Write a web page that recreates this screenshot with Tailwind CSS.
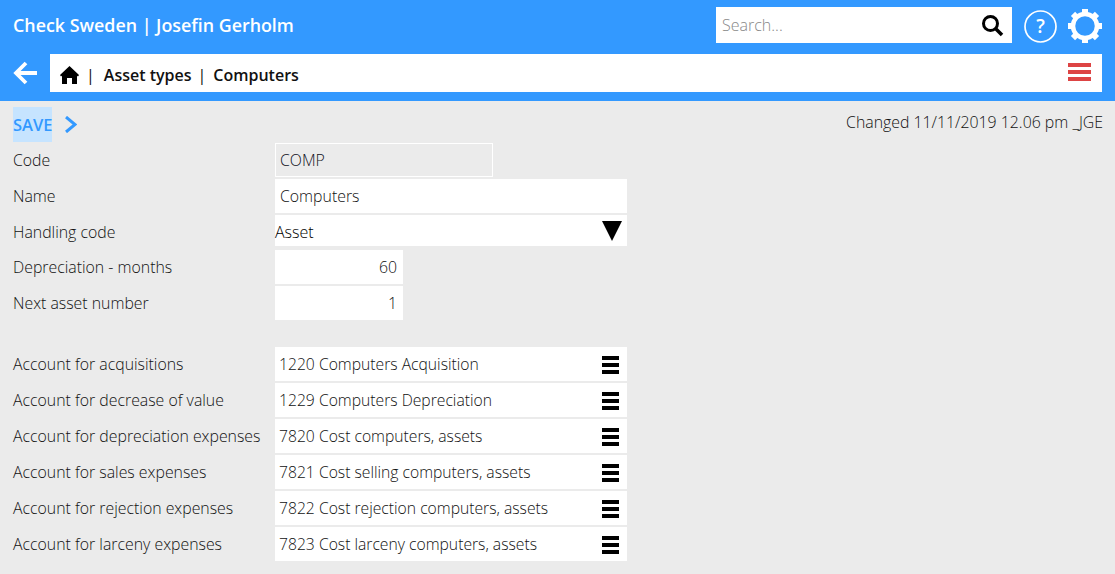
<!DOCTYPE html>
<html>
<head>
<meta charset="utf-8">
<script src="https://cdn.jsdelivr.net/npm/@tailwindcss/browser@4"></script>
</head>
<body class="m-0 bg-[#ebebeb] font-['Open_Sans',sans-serif] text-[15.850px] font-light text-[#111] h-[574px] w-[1115px] overflow-hidden">
<header class="bg-[#3399ff] h-[101px] flex flex-col">
  <div class="h-[54px] flex items-start">
    <div class="pl-[13px] pt-[12px] text-white text-[17.850px] font-semibold leading-[26px] flex-1">Check Sweden | Josefin Gerholm</div>
    <div class="mt-[7px] w-[296px] h-[36px] bg-white flex items-center justify-between pl-[6px] pr-[8px]">
      <span class="text-[16px] text-[#888]">Search...</span>
      <svg width="24" height="24" viewBox="0 0 24 24" fill="none" stroke="#000"><circle cx="10.5" cy="10.5" r="7" stroke-width="3"/><path d="M15.5 15.5 L22 22" stroke-width="3.6"/></svg>
    </div>
    <svg class="mt-[10px] ml-[12px]" width="33" height="33" viewBox="0 0 33 33"><circle cx="16.5" cy="16.5" r="15.500" fill="none" stroke="#fff" stroke-width="1.700"/><text x="16.5" y="23" text-anchor="middle" fill="#fff" font-size="19" font-weight="600" font-family="Open Sans">?</text></svg>
    <svg class="mt-[8px] ml-[10px] mr-[12px]" width="36" height="36" viewBox="0 0 36 36" fill="#fff">
      <circle cx="18" cy="18" r="12" fill="none" stroke="#fff" stroke-width="4.500"/>
      <rect x="15" y="1" width="6" height="6"/>
      <rect x="15" y="1" width="6" height="6" transform="rotate(45 18 18)"/>
      <rect x="15" y="1" width="6" height="6" transform="rotate(90 18 18)"/>
      <rect x="15" y="1" width="6" height="6" transform="rotate(135 18 18)"/>
      <rect x="15" y="1" width="6" height="6" transform="rotate(180 18 18)"/>
      <rect x="15" y="1" width="6" height="6" transform="rotate(225 18 18)"/>
      <rect x="15" y="1" width="6" height="6" transform="rotate(270 18 18)"/>
      <rect x="15" y="1" width="6" height="6" transform="rotate(315 18 18)"/>
    </svg>
  </div>
  <div class="flex items-start">
    <div class="w-[50px] h-[38px] flex items-center pl-[13px]">
      <svg width="25" height="26" viewBox="0 0 25 26" fill="none" stroke="#fff" stroke-width="3.800"><path d="M24 13H4M13 3 3 13l10 10"/></svg>
    </div>
    <div class="w-[1052px] h-[38px] bg-white flex items-center pl-[10px] pr-[11px] pt-[3px] text-[16px] font-semibold text-[#111]">
      <svg width="19" height="18" viewBox="0 0 19 18" fill="#000"><path d="M9.500 0 19 9l-1 1.500-1-.800V18h-5v-6H7v6H2V9.700l-1 .800L0 9z"/></svg>
      <span class="ml-[7px] font-normal">|</span>
      <span class="ml-[9px]">Asset types</span>
      <span class="ml-[6px] font-normal">|</span>
      <span class="ml-[7px]">Computers</span>
      <div class="ml-auto mb-[5px] w-[23px] flex flex-col gap-[3px]"><div class="h-[4px] bg-[#dd4444]"></div><div class="h-[4px] bg-[#dd4444]"></div><div class="h-[4px] bg-[#dd4444]"></div></div>
    </div>
  </div>
</header>
<main class="pl-[13px] pr-[12px]">
  <div class="flex items-start h-[42px] pt-[6px]">
    <span class="w-[39px] h-[35px] bg-[#c6e4ff] text-[#3399ff] text-[16.500px] font-semibold leading-[35px]">SAVE</span>
    <svg class="ml-[12px] mt-[9px]" width="13" height="17" viewBox="0 0 13 17" fill="none" stroke="#3399ff" stroke-width="3"><path d="M2 1l9 7.500-9 7.500"/></svg>
    <span class="ml-auto leading-[30px]">Changed 11/11/2019 12.06 pm _JGE</span>
  </div>
  <div class="flex flex-col">
    <div class="flex items-center h-[34px] mb-[2px]"><span class="w-[262px] pt-[2px]">Code</span><div class="w-[218px] h-full border border-white px-[4px] leading-[32px] text-[#112]">COMP</div></div>
    <div class="flex items-center h-[34px] mb-[2px]"><span class="w-[262px] pt-[2px]">Name</span><div class="w-[352px] h-full bg-white px-[5px] leading-[34px]">Computers</div></div>
    <div class="flex items-center h-[31px] mb-[4px]"><span class="w-[262px] pt-[4px]">Handling code</span><div class="w-[352px] h-full bg-white flex items-center justify-between pr-[5px] text-[16px] text-black"><span class="pt-[2px]">Asset</span><svg width="20" height="20" viewBox="0 0 20 20"><path d="M0 0h20L10 20z" fill="#000"/></svg></div></div>
    <div class="flex items-center h-[34px] mb-[2px]"><span class="w-[262px] pt-[2px]">Depreciation - months</span><div class="w-[128px] h-full bg-white px-[6px] text-right leading-[34px]">60</div></div>
    <div class="flex items-center h-[34px] mb-[27px]"><span class="w-[262px] pt-[2px]">Next asset number</span><div class="w-[128px] h-full bg-white px-[6px] text-right leading-[34px]">1</div></div>
    <div class="flex items-center h-[34px] mb-[2px]"><span class="w-[262px] pt-[2px]">Account for acquisitions</span><div class="w-[352px] h-full bg-white flex items-center justify-between pl-[4px] pr-[8px] pt-[2px] text-[15.700px]">1220 Computers Acquisition<div class="w-[17px] flex flex-col gap-[3px]"><div class="h-[4px] bg-black"></div><div class="h-[4px] bg-black"></div><div class="h-[4px] bg-black"></div></div></div></div>
    <div class="flex items-center h-[34px] mb-[2px]"><span class="w-[262px] pt-[2px]">Account for decrease of value</span><div class="w-[352px] h-full bg-white flex items-center justify-between pl-[4px] pr-[8px] pt-[2px] text-[15.700px]">1229 Computers Depreciation<div class="w-[17px] flex flex-col gap-[3px]"><div class="h-[4px] bg-black"></div><div class="h-[4px] bg-black"></div><div class="h-[4px] bg-black"></div></div></div></div>
    <div class="flex items-center h-[34px] mb-[2px]"><span class="w-[262px] pt-[2px]">Account for depreciation expenses</span><div class="w-[352px] h-full bg-white flex items-center justify-between pl-[4px] pr-[8px] pt-[2px] text-[15.700px]">7820 Cost computers, assets<div class="w-[17px] flex flex-col gap-[3px]"><div class="h-[4px] bg-black"></div><div class="h-[4px] bg-black"></div><div class="h-[4px] bg-black"></div></div></div></div>
    <div class="flex items-center h-[34px] mb-[2px]"><span class="w-[262px] pt-[2px]">Account for sales expenses</span><div class="w-[352px] h-full bg-white flex items-center justify-between pl-[4px] pr-[8px] pt-[2px] text-[15.700px]">7821 Cost selling computers, assets<div class="w-[17px] flex flex-col gap-[3px]"><div class="h-[4px] bg-black"></div><div class="h-[4px] bg-black"></div><div class="h-[4px] bg-black"></div></div></div></div>
    <div class="flex items-center h-[34px] mb-[2px]"><span class="w-[262px] pt-[2px]">Account for rejection expenses</span><div class="w-[352px] h-full bg-white flex items-center justify-between pl-[4px] pr-[8px] pt-[2px] text-[15.700px]">7822 Cost rejection computers, assets<div class="w-[17px] flex flex-col gap-[3px]"><div class="h-[4px] bg-black"></div><div class="h-[4px] bg-black"></div><div class="h-[4px] bg-black"></div></div></div></div>
    <div class="flex items-center h-[34px]"><span class="w-[262px] pt-[2px]">Account for larceny expenses</span><div class="w-[352px] h-full bg-white flex items-center justify-between pl-[4px] pr-[8px] pt-[2px] text-[15.700px]">7823 Cost larceny computers, assets<div class="w-[17px] flex flex-col gap-[3px]"><div class="h-[4px] bg-black"></div><div class="h-[4px] bg-black"></div><div class="h-[4px] bg-black"></div></div></div></div>
  </div>
</main>
</body>
</html>
